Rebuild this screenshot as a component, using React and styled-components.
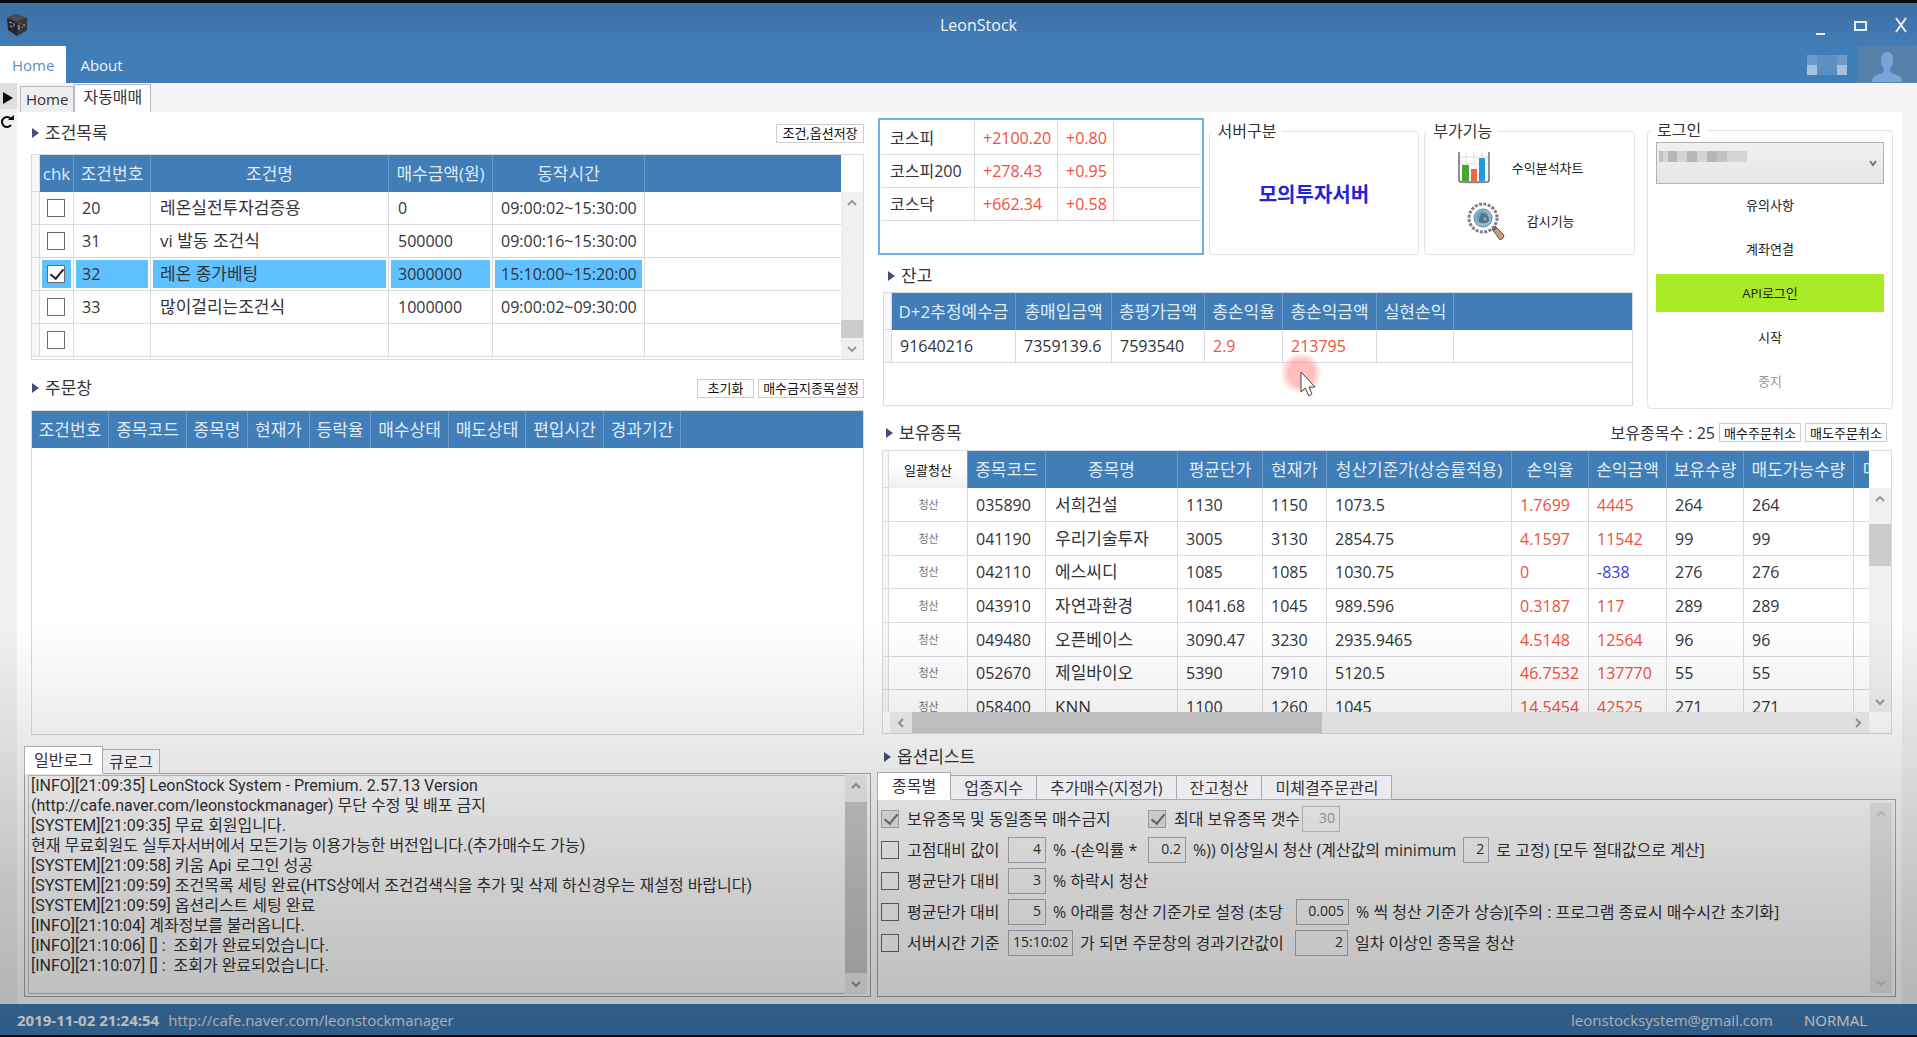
import React from "react";
import styled, { createGlobalStyle, css } from "styled-components";

const BLUE = "#417eb8";
const LINE = "#dcdae0";
const RED = "#f0503c";
const NAVY = "#3a3adc";

const GlobalStyle = createGlobalStyle`
  * {
    box-sizing: border-box;
  }
  body {
    margin: 0;
    background: #fff;
    color: #333338;
    font: 16px/20px "Open Sans", "Noto Sans CJK KR", sans-serif;
  }
  button, input, select, textarea {
    margin: 0;
    font: inherit;
    color: inherit;
    border-radius: 0;
  }
`;

const Window = styled.div`
  display: flex;
  flex-direction: column;
  min-height: 100vh;
  border-top: 3px solid #05090f;
  border-bottom: 2px solid #05090f;
  overflow: hidden;
`;
const Shade = styled.div`
  position: fixed;
  inset: 0;
  pointer-events: none;
  background: linear-gradient(
    rgba(0, 0, 0, 0) 60%,
    rgba(0, 0, 0, 0.07) 70%,
    rgba(0, 0, 0, 0.14) 79%,
    rgba(0, 0, 0, 0.2) 87%,
    rgba(0, 0, 0, 0.26) 98%
  );
`;

/* ---------- title and menu ---------- */

const Top = styled.header`
  background: linear-gradient(#3d6fa3, ${BLUE} 60%);
  color: #edf4fa;
`;
const TitleBar = styled.div`
  display: grid;
  grid-template-columns: 120px 1fr 120px;
  align-items: center;
  height: 43px;
  padding: 0 6px;
`;
const AppTitle = styled.h1`
  margin: 0 0 0 40px;
  font-size: 16px;
  font-weight: 400;
  text-align: center;
`;
const WindowButtons = styled.div`
  display: flex;
  justify-content: flex-end;
  gap: 18px;
`;
const WindowButton = styled.button`
  display: flex;
  width: 22px;
  height: 22px;
  padding: 0;
  border: 0;
  background: none;
`;
const MenuBar = styled.nav`
  display: flex;
  height: 37px;
`;
const MenuItem = styled.a`
  display: flex;
  align-items: center;
  padding: 0 12px;
  font-size: 15px;
  font-weight: ${(p) => (p.$active ? 400 : 500)};
  text-decoration: none;
  color: ${(p) => (p.$active ? "#5f8ebc" : "#edf4fa")};
  background: ${(p) => (p.$active ? "#fff" : "none")};
  & + & {
    padding-left: 14px;
  }
`;
const UserArea = styled.div`
  display: flex;
  align-items: center;
  gap: 10px;
  margin-left: auto;
`;
const Avatar = styled.div`
  display: flex;
  justify-content: center;
  align-items: flex-end;
  width: 60px;
  height: 37px;
  background: #567fa9;
`;

/* ---------- frame ---------- */

const Frame = styled.div`
  flex: 1;
  display: flex;
  background: #f4f3f6;
`;
const Gutter = styled.div`
  display: flex;
  flex-direction: column;
  width: 17px;
  background: #f1f1f2;
`;
const GutterButton = styled.button`
  display: flex;
  align-items: center;
  height: 26px;
  padding: ${(p) => (p.$shaded ? "4px 0 0" : "0")};
  border: 0;
  background: ${(p) => (p.$shaded ? "#dfdee1" : "none")};
`;
const Page = styled.main`
  flex: 1;
  min-width: 0;
  display: flex;
  flex-direction: column;
  margin-right: 15px;
`;
const PageTabs = styled.div`
  display: flex;
  align-items: flex-end;
  height: 29px;
  padding-left: 3px;
`;
const PageTab = styled.button`
  height: ${(p) => (p.$active ? "28px" : "26px")};
  padding: ${(p) => (p.$active ? "0 8px 3px" : "0 5px 2px")};
  border: 1px solid #b9b8bc;
  border-bottom: 0;
  background: ${(p) => (p.$active ? "#fff" : "#efeef1")};
  font-size: ${(p) => (p.$active ? "16px" : "15px")};
  line-height: 20px;
`;
const Columns = styled.div`
  flex: 1;
  display: flex;
  gap: 6px;
  padding: 0 6px 7px 7px;
  background: #fff;
`;
const Column = styled.div`
  flex: ${(p) => p.$share} 1 0;
  min-width: 0;
  display: flex;
  flex-direction: column;
`;
const Section = styled.section`
  display: flex;
  flex-direction: column;
  flex: ${(p) => (p.$grow ? 1 : "none")};
  padding: ${(p) => p.$pad || "0 7px"};
`;
const SectionHead = styled.div`
  display: flex;
  align-items: center;
  gap: 4px;
  height: ${(p) => p.$height}px;
  padding: ${(p) => p.$top || 0}px ${(p) => p.$right || 0}px 0
    ${(p) => p.$left || 0}px;
`;
const Heading = styled.h2`
  display: flex;
  align-items: center;
  gap: 6px;
  margin: 0 auto 0 0;
  font-size: 17px;
  font-weight: 400;
  &::before {
    content: "";
    border: 5px solid transparent;
    border-left: 7px solid #43507e;
    border-right: 0;
  }
`;
const SmallButton = styled.button`
  height: 19px;
  min-width: ${(p) => p.$min || 0}px;
  padding: 0 4px;
  border: 1px solid #cfcdd4;
  background: #fefefe;
  color: #111;
  font-size: 13px;
  line-height: 16px;
  white-space: nowrap;
`;

/* ---------- grids ---------- */

const GridBox = styled.div`
  position: relative;
  display: flex;
  flex: ${(p) => (p.$grow ? 1 : "none")};
  height: ${(p) => (p.$height ? p.$height + "px" : "auto")};
  border: 1px solid ${LINE};
`;
const GridView = styled.div`
  flex: 1;
  min-width: 0;
  overflow: hidden;
`;
const Grid = styled.table`
  width: ${(p) => (p.$width ? p.$width + "px" : "100%")};
  table-layout: fixed;
  border-collapse: separate;
  border-spacing: 0;
  white-space: nowrap;
`;
const Th = styled.th`
  height: 37px;
  padding: 0;
  border-right: 1px solid #6d9ccb;
  background: ${BLUE};
  color: #dfebf6;
  font-size: 17px;
  font-weight: 400;
  overflow: hidden;
  &:last-child {
    border-right: 0;
  }
`;
const Blank = styled.td`
  padding: 0;
  background: #f7f6f8;
  border-right: 1px solid ${LINE};
  border-bottom: 1px solid ${LINE};
`;
const Td = styled.td`
  height: 33px;
  padding: 0 0 0 ${(p) => p.$pad || (p.$name ? 9 : 8)}px;
  border-right: 1px solid ${LINE};
  border-bottom: 1px solid ${LINE};
  color: ${(p) => p.$color || "inherit"};
  font-size: ${(p) => (p.$name ? "17px" : "16px")};
  overflow: hidden;
  &:last-child {
    border-right: 0;
  }
  ${(p) =>
    p.$selected &&
    css`
      background: #5fc1ff;
      box-shadow: inset 0 0 0 2px #fff;
    `}
`;
const HoldingRow = styled.tr`
  td {
    height: 34px;
  }
  &:nth-child(3n) td {
    height: 33px;
  }
`;
const SellAll = styled.button`
  display: block;
  width: 100%;
  height: 37px;
  padding: 0;
  border: 0;
  background: linear-gradient(#fff 40%, #efeef2);
  color: #111;
  font-size: 13px;
`;
const SellOne = styled.button`
  display: block;
  width: 100%;
  padding: 0;
  border: 0;
  background: none;
  color: #77777c;
  font-size: 11px;
`;

/* ---------- scroll bars ---------- */

const BarBox = styled.div`
  display: flex;
  flex: none;
  flex-direction: ${(p) => (p.$across ? "row" : "column")};
  ${(p) => (p.$across ? "height: 21px;" : "width: 22px;")}
  margin: ${(p) => p.$margin || 0};
  background: ${(p) => (p.$faded ? "#ececec" : "#f0eff1")};
  color: ${(p) => (p.$faded ? "#cfcfcf" : "#98989c")};
`;
const BarEnd = styled.span`
  display: flex;
  flex: none;
  align-items: center;
  justify-content: center;
  width: 22px;
  height: 21px;
`;
const Track = styled.div`
  flex: 1;
  display: flex;
  flex-direction: inherit;
`;
const Space = styled.div`
  flex: ${(p) => p.$part} 1 0;
  background: ${(p) => (p.$thumb ? "#cccbcd" : "none")};
`;

const Chevron = ({ turn = 0 }) => (
  <svg width="12" height="12" viewBox="0 0 12 12">
    <path
      d="M2 8l4-4 4 4"
      fill="none"
      stroke="currentColor"
      strokeWidth="2"
      transform={`rotate(${turn} 6 6)`}
    />
  </svg>
);

const ScrollBar = ({ across, faded, margin, parts }) => (
  <BarBox $across={across} $faded={faded} $margin={margin} aria-hidden="true">
    <BarEnd>
      <Chevron turn={across ? -90 : 0} />
    </BarEnd>
    <Track>
      <Space $part={parts[0]} />
      <Space $part={parts[1]} $thumb />
      <Space $part={parts[2]} />
    </Track>
    <BarEnd>
      <Chevron turn={across ? 90 : 180} />
    </BarEnd>
  </BarBox>
);

/* ---------- form parts ---------- */

const Check = styled.input.attrs({ type: "checkbox" })`
  appearance: none;
  display: block;
  flex: none;
  width: 18px;
  height: 18px;
  border: 1px solid #6c6c70;
  background: #fff;
  &:checked::after {
    content: "";
    display: block;
    width: 6px;
    height: 11px;
    margin: 0 0 0 5px;
    border: solid #222;
    border-width: 0 2px 2px 0;
    transform: rotate(40deg);
  }
  &:disabled {
    border-color: #b4b4b8;
    background: #ececee;
  }
  &:disabled::after {
    border-color: #707074;
  }
`;
const Field = styled.input`
  width: ${(p) => p.$width}px;
  height: 26px;
  padding: 0 4px 2px;
  border: 1px solid #b3b2ba;
  background: none;
  font-size: 14px;
  text-align: right;
  &:disabled {
    border-color: #c9c9cf;
    color: #a5a5a8;
  }
`;
const OptionRow = styled.div`
  display: flex;
  align-items: center;
  gap: ${(p) => (p.$tight ? 2 : 7)}px;
  height: 31px;
  white-space: nowrap;
`;
const OptionText = styled.span`
  min-width: ${(p) => p.$min || 0}px;
`;
const CheckLabel = styled.label`
  display: flex;
  align-items: center;
  gap: 8px;
  min-width: ${(p) => p.$min || 0}px;
`;
const Tabs = styled.div`
  display: flex;
  align-items: flex-end;
  height: 28px;
  margin-bottom: -1px;
  z-index: 1;
`;
const Tab = styled.button`
  height: ${(p) => (p.$active ? "28px" : "25px")};
  padding: 0 ${(p) => p.$pad || 13}px;
  border: 1px solid #aaa9ad;
  border-left-width: ${(p) => (p.$active ? "1px" : "0")};
  border-bottom-color: ${(p) => (p.$active ? "#fff" : "#aaa9ad")};
  background: ${(p) => (p.$active ? "#fff" : "#ebeaee")};
  line-height: 20px;
`;
const Panel = styled.div`
  flex: 1;
  display: flex;
  min-height: ${(p) => p.$min}px;
  padding: 1px 3px 2px;
  border: 1px solid #aaa9ad;
`;
const Log = styled.textarea`
  flex: 1;
  padding: 0 0 0 2px;
  border: 1px solid #c6c6ca;
  border-right: 0;
  background: none;
  outline: 0;
  resize: none;
  overflow: hidden;
  font-family: Roboto, "Noto Sans CJK KR", sans-serif;
  font-size: 16px;
  line-height: 20px;
`;
const Options = styled.div`
  flex: 1;
  padding-top: 2px;
`;

/* ---------- right side, upper block ---------- */

const Upper = styled.div`
  display: flex;
  gap: 12px;
  padding: 6px 3px 0 1px;
`;
const UpperMain = styled.div`
  flex: 1;
  min-width: 0;
`;
const Cards = styled.div`
  display: grid;
  grid-template-columns: 326fr 211fr 211fr;
  gap: 5px;
  height: 137px;
`;
const IndexBox = styled.div`
  padding: 2px 1px;
  border: 2px solid #6db2e4;
`;
const Group = styled.fieldset`
  flex: 1;
  min-width: 0;
  margin: ${(p) => (p.$flush ? 2 : 3)}px 0 0;
  padding: 0 ${(p) => (p.$flush ? 8 : 7)}px;
  border: 1px solid #e2e2e7;
  border-radius: 4px;
`;
const Legend = styled.legend`
  margin-left: -5px;
  padding: 0 6px;
`;
const ServerName = styled.p`
  margin: 44px 0 0;
  color: #2424d6;
  font-size: 20px;
  font-weight: 700;
  text-align: center;
`;
const ToolButton = styled.button`
  display: flex;
  align-items: center;
  justify-content: center;
  gap: 22px;
  width: 100%;
  height: 42px;
  margin-top: ${(p) => (p.$first ? "6px" : "11px")};
  padding: 0 18px 0 0;
  border: 0;
  background: none;
  color: #222;
  font-size: 13px;
`;
const Login = styled.div`
  display: flex;
  width: 246px;
  height: 291px;
`;
const SelectBox = styled.div`
  position: relative;
  margin-top: 2px;
`;
const AccountSelect = styled.select`
  display: block;
  appearance: none;
  width: 100%;
  height: 42px;
  border: 1px solid #b2b2b4;
  background: linear-gradient(#f0f0f0, #e6e6e6);
`;
const Mosaic = styled.svg`
  position: absolute;
  left: 3px;
  top: 9px;
`;
const Arrow = styled.svg`
  position: absolute;
  right: 7px;
  top: 17px;
`;
const LoginButton = styled.button`
  display: block;
  width: 100%;
  height: 38px;
  margin-top: ${(p) => (p.$first ? "2px" : "6px")};
  padding: 0;
  border: 0;
  background: ${(p) => (p.$lit ? "#a8eb26" : "none")};
  color: #222;
  font-size: 13px;
  &:disabled {
    color: #98989b;
  }
`;
const Pointer = styled.svg`
  position: absolute;
  left: 395px;
  top: 56px;
`;

/* ---------- status ---------- */

const StatusBar = styled.footer`
  display: flex;
  align-items: center;
  height: 31px;
  padding: 1px 50px 0 17px;
  background: ${BLUE};
  color: #fff;
  font-size: 15px;
`;
const StatusTime = styled.time`
  margin-right: 9px;
  font-weight: 700;
`;
const StatusLink = styled.a`
  color: #e4ecf4;
  text-decoration: none;
  margin-right: ${(p) => (p.$last ? "31px" : "auto")};
`;

/* ---------- data ---------- */

const CONDITIONS = [
  ["20", "레온실전투자검증용", "0", "09:00:02~15:30:00"],
  ["31", "vi 발동 조건식", "500000", "09:00:16~15:30:00"],
  ["32", "레온 종가베팅", "3000000", "15:10:00~15:20:00"],
  ["33", "많이걸리는조건식", "1000000", "09:00:02~09:30:00"],
  ["", "", "", ""],
];

const ORDER_COLUMNS = [
  ["조건번호", 77],
  ["종목코드", 78],
  ["종목명", 61],
  ["현재가", 62],
  ["등락율", 61],
  ["매수상태", 78],
  ["매도상태", 77],
  ["편입시간", 78],
  ["경과기간", 77],
];

const INDEXES = [
  ["코스피", "+2100.20", "+0.80"],
  ["코스피200", "+278.43", "+0.95"],
  ["코스닥", "+662.34", "+0.58"],
];

const BALANCE = [
  ["D+2추정예수금", 124, "91640216"],
  ["총매입금액", 96, "7359139.6"],
  ["총평가금액", 93, "7593540"],
  ["총손익율", 78, "2.9", RED],
  ["총손익금액", 94, "213795", RED],
  ["실현손익", 77, ""],
];

const HOLDING_COLUMNS = [
  ["종목코드", 78],
  ["종목명", 132],
  ["평균단가", 85],
  ["현재가", 64],
  ["청산기준가(상승률적용)", 185],
  ["손익율", 77],
  ["손익금액", 78],
  ["보유수량", 77],
  ["매도가능수량", 110],
  ["매수금액", 80],
];

const HOLDINGS = [
  ["035890", "서희건설", "1130", "1150", "1073.5", "1.7699", "4445", "264"],
  ["041190", "우리기술투자", "3005", "3130", "2854.75", "4.1597", "11542", "99"],
  ["042110", "에스씨디", "1085", "1085", "1030.75", "0", "-838", "276"],
  ["043910", "자연과환경", "1041.68", "1045", "989.596", "0.3187", "117", "289"],
  ["049480", "오픈베이스", "3090.47", "3230", "2935.9465", "4.5148", "12564", "96"],
  ["052670", "제일바이오", "5390", "7910", "5120.5", "46.7532", "137770", "55"],
  ["058400", "KNN", "1100", "1260", "1045", "14.5454", "42525", "271"],
];

const LOG = `[INFO][21:09:35] LeonStock System - Premium. 2.57.13 Version
(http://cafe.naver.com/leonstockmanager) 무단 수정 및 배포 금지
[SYSTEM][21:09:35] 무료 회원입니다.
현재 무료회원도 실투자서버에서 모든기능 이용가능한 버전입니다.(추가매수도 가능)
[SYSTEM][21:09:58] 키움 Api 로그인 성공
[SYSTEM][21:09:59] 조건목록 세팅 완료(HTS상에서 조건검색식을 추가 및 삭제 하신경우는 재설정 바랍니다)
[SYSTEM][21:09:59] 옵션리스트 세팅 완료
[INFO][21:10:04] 계좌정보를 불러옵니다.
[INFO][21:10:06] [] :  조회가 완료되었습니다.
[INFO][21:10:07] [] :  조회가 완료되었습니다.`;

const holdingColor = (i, value) => {
  if (i !== 5 && i !== 6) return undefined;
  return value.startsWith("-") ? NAVY : RED;
};

/* ---------- drawings ---------- */

const CubeLogo = () => (
  <svg width="22" height="24" viewBox="0 0 22 24">
    <path d="M1 5L10 1l11 4v12l-10 6-9-6z" fill="#23252a" />
    <path d="M1 5L10 1l11 4-10 4z" fill="#4a4c50" />
    <path d="M11 9l10-4v12l-10 6z" fill="#35373b" />
    <path d="M3 9l3 1M4 13l2 1M8 10v3M13 12v5M16 14v1M18 11v2" stroke="#b9b4b2" />
    <path d="M7 13v2M14 9v2" stroke="#8d4a45" />
  </svg>
);

const ChartIcon = () => (
  <svg width="32" height="34" viewBox="0 0 32 34">
    <ellipse cx="16" cy="32" rx="11" ry="1" fill="#e4e4e4" />
    <rect x="1" y="1" width="30" height="30" rx="2" fill="#fff" />
    <path d="M2 6h28M2 13h28M8 1v12M16 1v12M24 1v5" stroke="#dcdce2" />
    <path d="M1 1v28q0 2 2 2h26q2 0 2-2V1" fill="none" stroke="#6d6a78" strokeWidth="1.5" />
    <path d="M4 14h7v16H4z" fill="#4ba52c" />
    <path d="M13 18h6v12h-6z" fill="#ef6848" />
    <path d="M21 7h6v23h-6z" fill="#1d9bdf" />
  </svg>
);

const WatchIcon = () => (
  <svg width="38" height="40" viewBox="0 0 38 40">
    <path d="M25 28l3-3 9 9q0 4-4 5z" fill="#c79c78" stroke="#6f5556" />
    <path d="M24 27l3-3 3 3-3 3z" fill="#5c5268" />
    <circle cx="16" cy="17" r="14" fill="#fff" stroke="#857a8c" strokeWidth="3" strokeDasharray="3 1.4" />
    <circle cx="16" cy="17" r="9" fill="#8fbfd6" stroke="#6d7c94" />
    <path d="M9 14q6-8 13 0l-5 1q-4 1-5 7-4-3-3-8z" fill="#69a3c2" />
    <path d="M16 12q7 2 6 8-5 4-10 1 0-7 4-9z" fill="#57708d" />
    <circle cx="18" cy="18" r="2" fill="#8b97aa" />
  </svg>
);

/* ---------- panels ---------- */

const Conditions = () => (
  <Section>
    <SectionHead $height={42} $left={1}>
      <Heading>조건목록</Heading>
      <SmallButton $min={88}>조건,옵션저장</SmallButton>
    </SectionHead>
    <GridBox $height={206}>
      <GridView>
        <Grid>
          <colgroup>
            <col width="8" />
            <col width="34" />
            <col width="77" />
            <col width="238" />
            <col width="104" />
            <col width="152" />
            <col />
          </colgroup>
          <thead>
            <tr>
              <Blank />
              <Th>chk</Th>
              <Th>조건번호</Th>
              <Th>조건명</Th>
              <Th>매수금액(원)</Th>
              <Th>동작시간</Th>
              <Th />
            </tr>
          </thead>
          <tbody>
            {CONDITIONS.map(([no, name, amount, time]) => {
              const selected = no === "32";
              return (
                <tr key={no}>
                  <Blank />
                  <Td $pad={7} $selected={selected}>
                    <Check defaultChecked={selected} aria-label={`조건 ${no}`} />
                  </Td>
                  <Td $selected={selected}>{no}</Td>
                  <Td $name $selected={selected}>
                    {name}
                  </Td>
                  <Td $pad={9} $selected={selected}>
                    {amount}
                  </Td>
                  <Td $selected={selected}>{time}</Td>
                  <Td />
                </tr>
              );
            })}
          </tbody>
        </Grid>
      </GridView>
      <ScrollBar margin="37px 0 0" parts={[108, 18, 0]} />
    </GridBox>
  </Section>
);

const Orders = () => (
  <Section $grow>
    <SectionHead $height={50} $top={6} $left={1}>
      <Heading>주문창</Heading>
      <SmallButton $min={57}>초기화</SmallButton>
      <SmallButton $min={106}>매수금지종목설정</SmallButton>
    </SectionHead>
    <GridBox $grow>
      <GridView>
        <Grid>
          <colgroup>
            {ORDER_COLUMNS.map(([name, width]) => (
              <col key={name} width={width} />
            ))}
            <col />
          </colgroup>
          <thead>
            <tr>
              {ORDER_COLUMNS.map(([name]) => (
                <Th key={name}>{name}</Th>
              ))}
              <Th />
            </tr>
          </thead>
        </Grid>
      </GridView>
    </GridBox>
  </Section>
);

const Logs = () => (
  <Section $pad="11px 0 0">
    <Tabs>
      <Tab $active $pad={9}>
        일반로그
      </Tab>
      <Tab $pad={6}>큐로그</Tab>
    </Tabs>
    <Panel $min={224}>
      <Log readOnly aria-label="일반로그" value={LOG} />
      <ScrollBar parts={[6, 169, 0]} />
    </Panel>
  </Section>
);

const Indexes = () => (
  <IndexBox>
    <Grid>
      <colgroup>
        <col width="94" />
        <col width="83" />
        <col width="56" />
        <col />
      </colgroup>
      <tbody>
        {INDEXES.map(([name, value, change]) => (
          <tr key={name}>
            <Td $pad={9}>{name}</Td>
            <Td $color={RED}>{value}</Td>
            <Td $color={RED}>{change}</Td>
            <Td />
          </tr>
        ))}
      </tbody>
    </Grid>
  </IndexBox>
);

const Balance = () => (
  <Section $pad="0 2px 0 5px">
    <SectionHead $height={37} $top={4} $left={5}>
      <Heading>잔고</Heading>
    </SectionHead>
    <GridBox $height={114}>
      <GridView>
        <Grid>
          <colgroup>
            <col width="8" />
            {BALANCE.map(([name, width]) => (
              <col key={name} width={width} />
            ))}
            <col />
          </colgroup>
          <thead>
            <tr>
              <Blank />
              {BALANCE.map(([name]) => (
                <Th key={name}>{name}</Th>
              ))}
              <Th />
            </tr>
          </thead>
          <tbody>
            <tr>
              <Blank />
              {BALANCE.map(([name, , value, color]) => (
                <Td key={name} $color={color}>
                  {value}
                </Td>
              ))}
              <Td />
            </tr>
          </tbody>
        </Grid>
      </GridView>
      <Pointer width="44" height="50" viewBox="0 0 44 50">
        <defs>
          <radialGradient id="press">
            <stop offset="0.6" stopColor="#ff7d78" stopOpacity="0.5" />
            <stop offset="1" stopColor="#ff7d78" stopOpacity="0" />
          </radialGradient>
        </defs>
        <circle cx="22" cy="24" r="21" fill="url(#press)" />
        <path
          d="M22 23v20l4-4 4 8 3-2-3-7h6z"
          fill="#fff"
          stroke="#444"
        />
      </Pointer>
    </GridBox>
  </Section>
);

const LoginBox = () => (
  <Login>
    <Group $flush>
      <Legend>로그인</Legend>
      <SelectBox>
        <AccountSelect aria-label="계좌" />
        <Mosaic width="90" height="11" aria-hidden="true">
          <path d="M0 0h88v11H0z" fill="#d5d5d6" />
          <path d="M9 0h9v11H9zM28 0h10v11H28zM48 0h10v11H48z" fill="#b6b6b8" />
          <path d="M58 0h10v11H58zM0 0h4v11H0z" fill="#c2c2c4" />
        </Mosaic>
        <Arrow width="8" height="8" viewBox="0 0 8 8" aria-hidden="true">
          <path d="M1 2l3 4 3-4" fill="none" stroke="#777" strokeWidth="2" />
        </Arrow>
      </SelectBox>
      <LoginButton $first>유의사항</LoginButton>
      <LoginButton>계좌연결</LoginButton>
      <LoginButton $lit>API로그인</LoginButton>
      <LoginButton>시작</LoginButton>
      <LoginButton disabled>중지</LoginButton>
    </Group>
  </Login>
);

const Holdings = () => (
  <Section $pad="0 4px 0 5px">
    <SectionHead $height={41} $top={6} $left={4} $right={5}>
      <Heading>보유종목</Heading>
      <span>보유종목수 : 25</span>
      <SmallButton $min={82}>매수주문취소</SmallButton>
      <SmallButton $min={82}>매도주문취소</SmallButton>
    </SectionHead>
    <GridBox $height={284}>
      <Column $share={1}>
        <GridView>
          <Grid $width={1051}>
            <colgroup>
              <col width="6" />
              <col width="79" />
              {HOLDING_COLUMNS.map(([name, width]) => (
                <col key={name} width={width} />
              ))}
            </colgroup>
            <thead>
              <tr>
                <Blank />
                <Th>
                  <SellAll>일괄청산</SellAll>
                </Th>
                {HOLDING_COLUMNS.map(([name]) => (
                  <Th key={name}>{name}</Th>
                ))}
              </tr>
            </thead>
            <tbody>
              {HOLDINGS.map((row) => (
                <HoldingRow key={row[0]}>
                  <Blank />
                  <Td $pad={1}>
                    <SellOne>청산</SellOne>
                  </Td>
                  {[...row, row[7]].map((value, i) => (
                    <Td key={i} $name={i === 1} $color={holdingColor(i, value)}>
                      {value}
                    </Td>
                  ))}
                  <Td />
                </HoldingRow>
              ))}
            </tbody>
          </Grid>
        </GridView>
        <ScrollBar across margin="0 0 0 7px" parts={[0, 411, 526]} />
      </Column>
      <ScrollBar margin="37px 0 21px" parts={[15, 42, 124]} />
    </GridBox>
  </Section>
);

const OptionList = () => (
  <Section $grow $pad="0">
    <SectionHead $height={38} $top={8} $left={7}>
      <Heading>옵션리스트</Heading>
    </SectionHead>
    <Tabs>
      <Tab $active $pad={14}>
        종목별
      </Tab>
      <Tab>업종지수</Tab>
      <Tab>추가매수(지정가)</Tab>
      <Tab>잔고청산</Tab>
      <Tab>미체결주문관리</Tab>
    </Tabs>
    <Panel $min={196}>
      <Options>
        <OptionRow $tight>
          <CheckLabel $min={265}>
            <Check defaultChecked disabled />
            보유종목 및 동일종목 매수금지
          </CheckLabel>
          <CheckLabel>
            <Check defaultChecked disabled />
            최대 보유종목 갯수
          </CheckLabel>
          <Field $width={38} defaultValue="30" disabled aria-label="최대 보유종목 갯수" />
        </OptionRow>
        <OptionRow>
          <CheckLabel $min={120}>
            <Check />
            고점대비 값이
          </CheckLabel>
          <Field $width={38} defaultValue="4" aria-label="고점대비 값" />
          <OptionText $min={88}>% -(손익률 *</OptionText>
          <Field $width={38} defaultValue="0.2" aria-label="손익률 배수" />
          <OptionText>%)) 이상일시 청산 (계산값의 minimum</OptionText>
          <Field $width={26} defaultValue="2" aria-label="minimum" />
          <OptionText>로 고정) [모두 절대값으로 계산]</OptionText>
        </OptionRow>
        <OptionRow>
          <CheckLabel $min={120}>
            <Check />
            평균단가 대비
          </CheckLabel>
          <Field $width={38} defaultValue="3" aria-label="하락 비율" />
          <OptionText>% 하락시 청산</OptionText>
        </OptionRow>
        <OptionRow>
          <CheckLabel $min={120}>
            <Check />
            평균단가 대비
          </CheckLabel>
          <Field $width={38} defaultValue="5" aria-label="청산 기준 비율" />
          <OptionText $min={236}>% 아래를 청산 기준가로 설정 (초당</OptionText>
          <Field $width={53} defaultValue="0.005" aria-label="초당 상승 비율" />
          <OptionText>
            % 씩 청산 기준가 상승)[주의 : 프로그램 종료시 매수시간 초기화]
          </OptionText>
        </OptionRow>
        <OptionRow>
          <CheckLabel $min={120}>
            <Check />
            서버시간 기준
          </CheckLabel>
          <Field $width={65} defaultValue="15:10:02" aria-label="서버시간" />
          <OptionText $min={208}>가 되면 주문창의 경과기간값이</OptionText>
          <Field $width={53} defaultValue="2" aria-label="경과기간" />
          <OptionText>일차 이상인 종목을 청산</OptionText>
        </OptionRow>
      </Options>
      <ScrollBar faded margin="2px 0 1px" parts={[1, 0, 0]} />
    </Panel>
  </Section>
);

const App = () => (
  <Window>
    <GlobalStyle />
    <Top>
      <TitleBar>
        <CubeLogo />
        <AppTitle>LeonStock</AppTitle>
        <WindowButtons>
          <WindowButton aria-label="최소화">
            <svg width="22" height="22">
              <path d="M7 20h9" stroke="#e6eff8" strokeWidth="2" />
            </svg>
          </WindowButton>
          <WindowButton aria-label="최대화">
            <svg width="22" height="22">
              <path d="M6 8h11v8H6z" fill="none" stroke="#e6eff8" strokeWidth="2" />
            </svg>
          </WindowButton>
          <WindowButton aria-label="닫기">
            <svg width="22" height="22">
              <path d="M7 4l10 14M17 4L7 18" stroke="#e6eff8" strokeWidth="2" />
            </svg>
          </WindowButton>
        </WindowButtons>
      </TitleBar>
      <MenuBar>
        <MenuItem href="#home" $active>
          Home
        </MenuItem>
        <MenuItem href="#about">About</MenuItem>
        <UserArea>
          <svg width="40" height="20" aria-hidden="true">
            <path d="M0 0h40v20H0z" fill="#5a90c4" />
            <path d="M0 0h10v10H0zM30 0h10v10H30z" fill="#6c9bca" />
            <path d="M0 10h10v10H0zM30 10h10v10H30z" fill="#a5c1e0" />
          </svg>
          <Avatar>
            <svg width="32" height="34" viewBox="0 0 32 34">
              <path
                d="M16 3c5 0 6 4 6 8 0 5-2 7-3 9 0 3 1 4 4 5 5 1 8 3 8 8H1c0-5 3-7 8-8 3-1 4-2 4-5-1-2-3-4-3-9 0-4 1-8 6-8z"
                fill="#76a5d8"
              />
            </svg>
          </Avatar>
        </UserArea>
      </MenuBar>
    </Top>
    <Frame>
      <Gutter>
        <GutterButton $shaded aria-label="실행">
          <svg width="17" height="16">
            <path d="M3 2l10 6-10 6z" fill="#0b0b12" />
          </svg>
        </GutterButton>
        <GutterButton aria-label="새로고침">
          <svg width="16" height="16">
            <path
              d="M11 5a5 5 0 1 0 0 6"
              fill="none"
              stroke="#0b0b12"
              strokeWidth="2"
            />
            <path d="M8 6h6V1z" fill="#0b0b12" />
          </svg>
        </GutterButton>
      </Gutter>
      <Page>
        <PageTabs>
          <PageTab>Home</PageTab>
          <PageTab $active>자동매매</PageTab>
        </PageTabs>
        <Columns>
          <Column $share={847}>
            <Conditions />
            <Orders />
            <Logs />
          </Column>
          <Column $share={1019}>
            <Upper>
              <UpperMain>
                <Cards>
                  <Indexes />
                  <Group>
                    <Legend>서버구분</Legend>
                    <ServerName>모의투자서버</ServerName>
                  </Group>
                  <Group>
                    <Legend>부가기능</Legend>
                    <ToolButton $first>
                      <ChartIcon />
                      수익분석차트
                    </ToolButton>
                    <ToolButton>
                      <WatchIcon />
                      감시기능
                    </ToolButton>
                  </Group>
                </Cards>
                <Balance />
              </UpperMain>
              <LoginBox />
            </Upper>
            <Holdings />
            <OptionList />
          </Column>
        </Columns>
      </Page>
    </Frame>
    <StatusBar>
      <StatusTime>2019-11-02 21:24:54</StatusTime>
      <StatusLink href="http://cafe.naver.com/leonstockmanager">
        http://cafe.naver.com/leonstockmanager
      </StatusLink>
      <StatusLink href="mailto:leonstocksystem@gmail.com" $last>
        leonstocksystem@gmail.com
      </StatusLink>
      <span>NORMAL</span>
    </StatusBar>
    <Shade />
  </Window>
);

export default App;
